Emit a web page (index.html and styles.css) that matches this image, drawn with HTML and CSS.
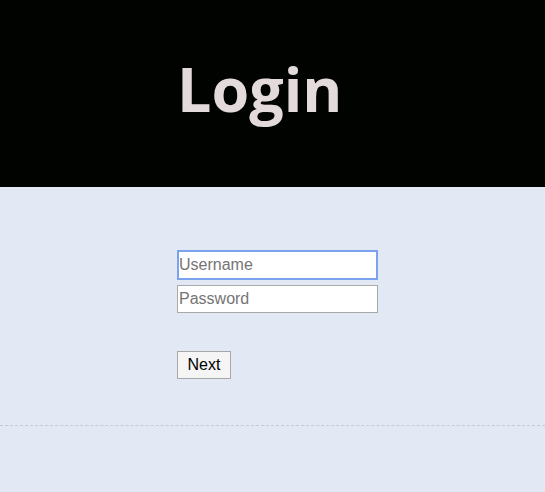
FILE: index.html
```html
<!DOCTYPE html>
<html>
<head>
<meta charset="utf-8">
<link rel="stylesheet" href="styles.css">
</head>
<body>
<header class="hero">
  <h1 class="title">Login</h1>
</header>
<main class="content">
  <form class="form">
    <input class="field field-focus" type="text" placeholder="Username">
    <input class="field" type="password" placeholder="Password">
    <button class="btn" type="button">Next</button>
  </form>
</main>
<hr class="divider">
</body>
</html>
```
FILE: styles.css
```css
html, body {
  margin: 0;
  padding: 0;
}
body {
  background: #e2e8f4;
  font-family: "Liberation Sans", Arial, sans-serif;
  height: 492px;
  overflow: hidden;
}
.hero {
  background: #000300;
  height: 187px;
  box-sizing: border-box;
  padding-left: 177px;
  padding-top: 46px;
}
.title {
  margin: 0;
  font-family: "Open Sans", sans-serif;
  font-weight: 700;
  font-size: 61px;
  line-height: 86px;
  color: #e2dadb;
}
.content {
  padding-left: 177px;
  padding-top: 64px;
}
.form {
  display: flex;
  flex-direction: column;
  align-items: flex-start;
}
.field {
  box-sizing: border-box;
  width: 201px;
  height: 28px;
  margin: 0 0 7px 0;
  padding: 0 1px;
  border: 1px solid #a9a9a9;
  background: #fff;
  font-family: "Liberation Sans", Arial, sans-serif;
  font-size: 16px;
  color: #000;
  outline: none;
}
.field::placeholder {
  color: #757575;
}
.field-focus {
  border: 2px solid #7aa2ee;
  height: 30px;
  margin-top: -1px;
  padding: 0;
  margin-bottom: 5px;
}
.btn {
  box-sizing: border-box;
  margin-top: 31px;
  width: 54px;
  height: 28px;
  padding: 0;
  border: 1px solid #a7a7a7;
  border-radius: 0;
  background: #f5f5f5;
  font-family: "Liberation Sans", Arial, sans-serif;
  font-size: 16px;
  color: #000;
}
.divider {
  margin: 46px 0 0 0;
  border: 0;
  border-top: 1px dashed #c5cad3;
  height: 0;
}
```
